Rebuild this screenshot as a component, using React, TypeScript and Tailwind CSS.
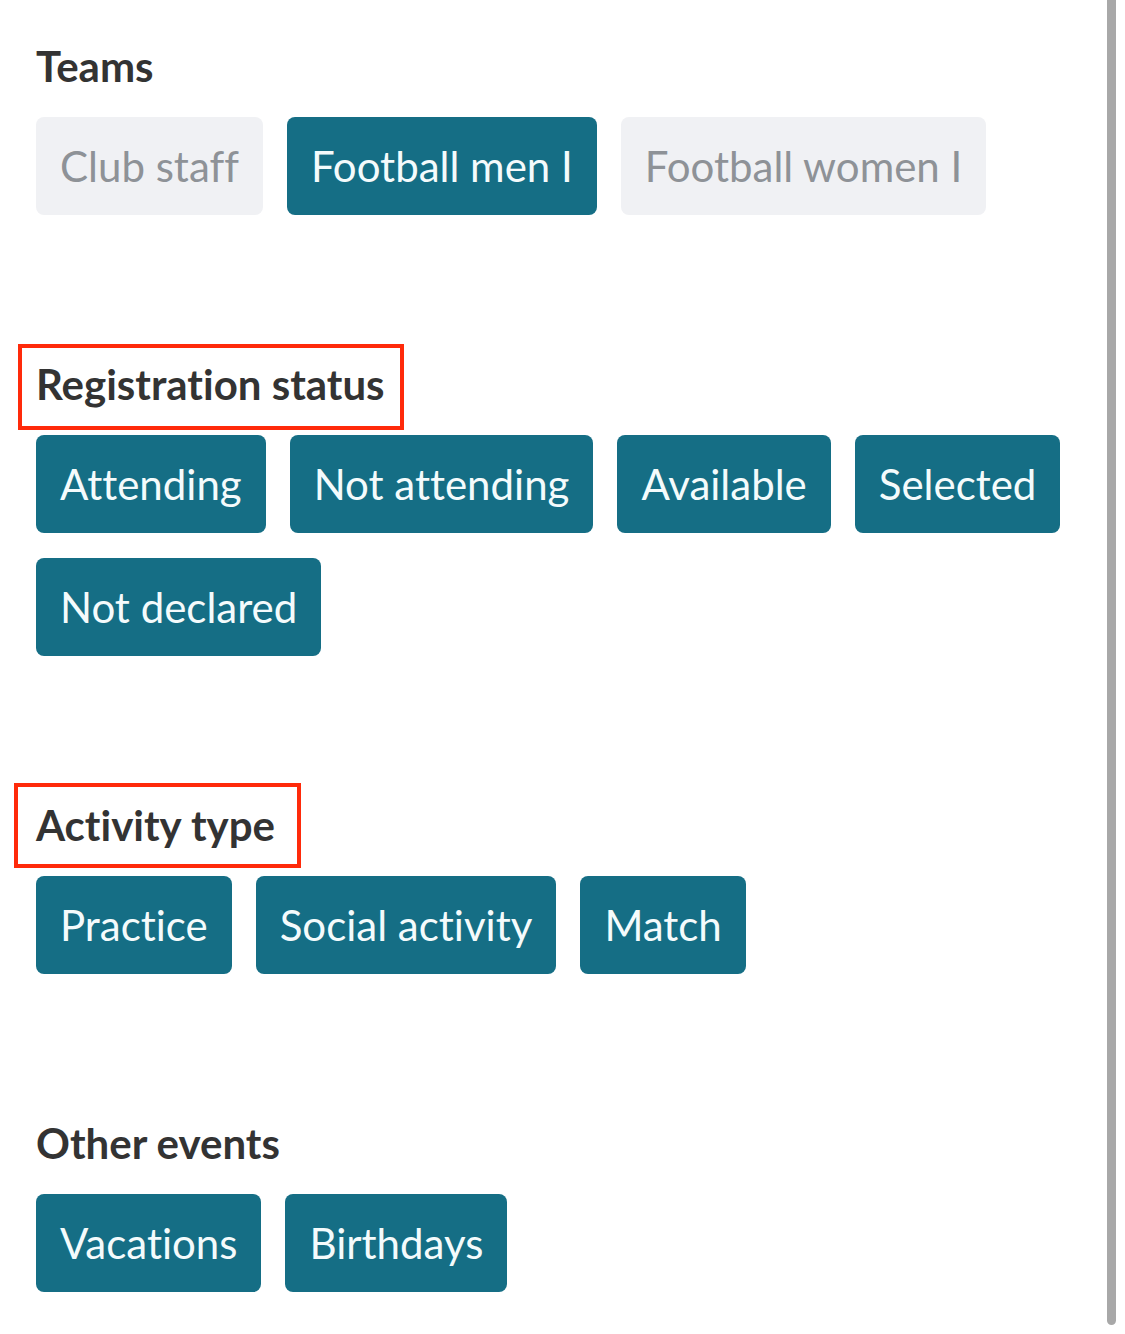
import React from 'react'

type Chip = { label: string; active: boolean }

const sections: { title: string; highlight?: string; chips: Chip[] }[] = [
  {
    title: 'Teams',
    chips: [
      { label: 'Club staff', active: false },
      { label: 'Football men I', active: true },
      { label: 'Football women I', active: false },
    ],
  },
  {
    title: 'Registration status',
    highlight: 'left-[-18px] top-[-12px] w-[386px] h-[86px]',
    chips: ['Attending', 'Not attending', 'Available', 'Selected', 'Not declared'].map(label => ({ label, active: true })),
  },
  {
    title: 'Activity type',
    highlight: 'left-[-22px] top-[-14px] w-[287px] h-[85px]',
    chips: ['Practice', 'Social activity', 'Match'].map(label => ({ label, active: true })),
  },
  {
    title: 'Other events',
    chips: ['Vacations', 'Birthdays'].map(label => ({ label, active: true })),
  },
]

const FilterChip: React.FC<{ chip: Chip }> = ({ chip }) => (
  <button
    className={`h-[98px] rounded-[8px] px-[24px] text-[42px] leading-none ${chip.active ? 'bg-[#156e85] text-[#f4fbfc]' : 'bg-[#f0f1f4] text-[#8e9297]'}`}
  >
    {chip.label}
  </button>
)

export default function App() {
  return (
    <div className="relative min-h-[1334px] bg-white font-['Lato','Noto_Sans',sans-serif] [font-variant-ligatures:none]">
      <div className="pt-[38px] pl-[36px] pr-[50px]">
        {sections.map((s, i) => (
          <section key={s.title} className={i > 0 ? 'mt-[141px]' : ''}>
            <div className="relative inline-block">
              <h2 className="text-[42px] leading-[56px] font-bold text-[#333333]">{s.title}</h2>
              {s.highlight && <div className={`absolute border-[4px] border-[#ff2a0a] ${s.highlight}`} />}
            </div>
            <div className="mt-[23px] flex flex-wrap gap-x-[24px] gap-y-[25px]">
              {s.chips.map(c => <FilterChip key={c.label} chip={c} />)}
            </div>
          </section>
        ))}
      </div>
      <div className="absolute right-[9px] top-0 h-[1325px] w-[9px] rounded-b-full bg-[#a8a8a8]" />
    </div>
  )
}
